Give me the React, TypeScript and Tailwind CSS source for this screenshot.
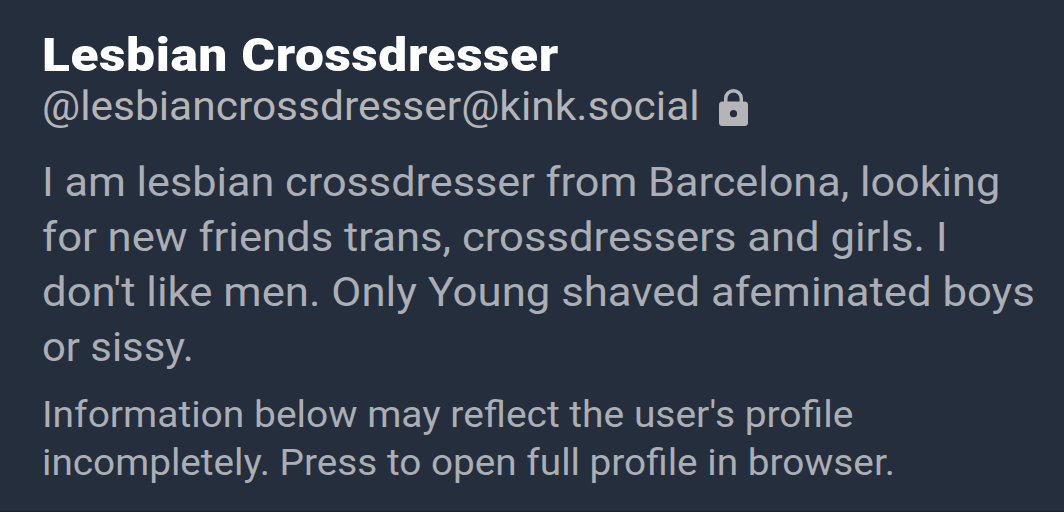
const bio = [
  { text: 'I am lesbian crossdresser from Barcelona, looking', stretch: 'scale-x-[1.08]' },
  { text: 'for new friends trans, crossdressers and girls. I', stretch: 'scale-x-[1.09]' },
  { text: "don't like men. Only Young shaved afeminated boys", stretch: 'scale-x-[1.093]' },
  { text: 'or sissy.', stretch: 'scale-x-[1.045]' },
];

const notice = [
  { text: "Information below may reflect the user's profile", stretch: 'scale-x-[1.082]' },
  { text: 'incompletely. Press to open full profile in browser.', stretch: 'scale-x-[1.076]' },
];

function LockIcon() {
  return (
    <svg viewBox="0 0 29 37" className="w-[29px] h-[37px]" fill="currentColor">
      <path
        fillRule="evenodd"
        d="M25.500 12.500H24V9.300a9.500 9.300 0 0 0-19 0v3.200H3.500A3.500 3.500 0 0 0 0 16v17.500A3.500 3.500 0 0 0 3.500 37h22a3.500 3.500 0 0 0 3.500-3.500V16a3.500 3.500 0 0 0-3.500-3.500ZM8.500 9.300a6 5.900 0 0 1 12 0v3.200h-12ZM14.500 28.300a3.600 3.600 0 1 1 0-7.200 3.600 3.600 0 0 1 0 7.200Z"
      />
    </svg>
  );
}

export default function App() {
  return (
    <main className="w-[1064px] h-[512px] overflow-hidden bg-[#252e3c] border-b border-[#1c222e] pl-[42px] pt-[28px] font-['Roboto',sans-serif] text-[#abaeb4] whitespace-nowrap">
      <h1 className="w-fit origin-left scale-x-[1.12] tracking-[0.5px] text-[46px] leading-[54px] font-black text-white">
        Lesbian Crossdresser
      </h1>
      <div className="flex items-center text-[40px] leading-[50px] text-[#b5b5b8]">
        <span className="w-[677px] origin-left">
          <span className="inline-block origin-left scale-x-[1.062]">@lesbiancrossdresser@kink.social</span>
        </span>
        <LockIcon />
      </div>
      <div className="mt-[23px] text-[40px] leading-[55px]">
        {bio.map((line) => (
          <p key={line.text} className={`w-fit origin-left ${line.stretch}`}>{line.text}</p>
        ))}
      </div>
      <div className="mt-[16px] text-[36px] leading-[48px]">
        {notice.map((line) => (
          <p key={line.text} className={`w-fit origin-left ${line.stretch}`}>{line.text}</p>
        ))}
      </div>
    </main>
  );
}
